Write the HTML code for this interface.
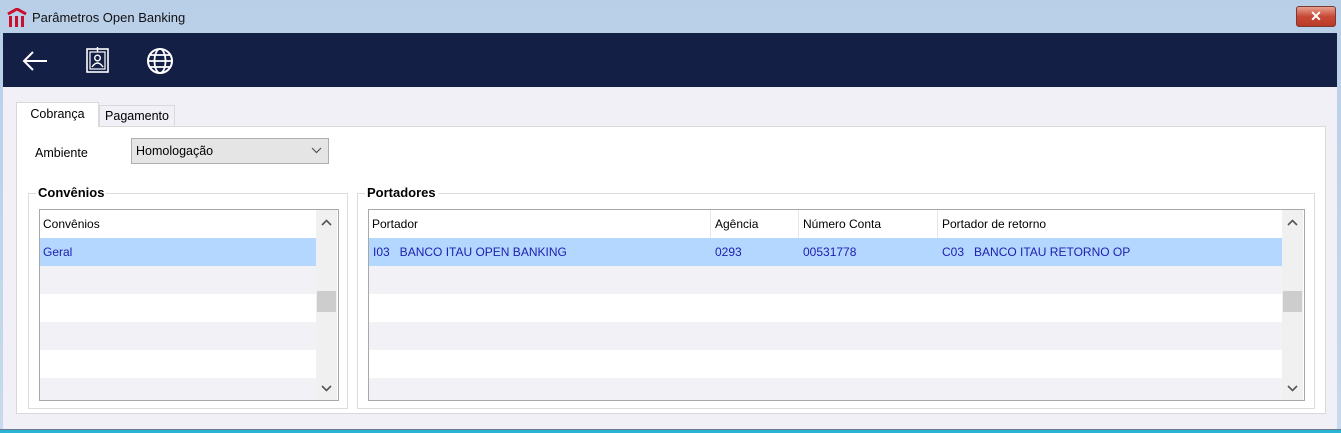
<!DOCTYPE html>
<html><head><meta charset="utf-8"><style>
*{margin:0;padding:0;box-sizing:border-box}
body{width:1341px;height:433px;overflow:hidden;background:#2a3a55;font-family:"Liberation Sans",Tahoma,sans-serif;font-size:12px;color:#000;position:relative}
.a{position:absolute}
.win{left:0;top:0;width:1341px;height:433px;background:linear-gradient(#b9cfe8,#c6d9ee);}
.title{left:32px;top:10px;font-size:13px;color:#111}
.tb{left:3px;top:33px;width:1334px;height:54px;background:#141f45}
.body{left:3px;top:87px;width:1334px;height:342px;background:#f0f0f6}
.cyan{left:0;top:429px;width:1341px;height:4px;background:#2bb3d6;border-top:1px solid #6a7a8a}
.page{left:16px;top:126px;width:1310px;height:288px;background:#fff;border:1px solid #d9d9d9}
.tab{height:24px;border:1px solid #d9d9d9;border-bottom:none;padding:4px 0 0 0;text-align:center;font-size:12.5px}
.grp{border:1px solid #dcdcdc;}
.gt{background:#fff;font-weight:bold;font-size:13px;padding:0 2px}
.list{border:1px solid #a8a8a8;background:#fff;overflow:hidden}
.row{position:absolute;left:0;height:28px;line-height:28px;padding-left:3px;white-space:nowrap}
.sb{position:absolute;top:0;width:21px;height:100%;background:#f0f0f0}
.th{position:absolute;top:0;height:28px;line-height:28px;border-left:1px solid #e6e6e6;padding-left:4px}
.blue{color:#2020b0}
</style></head><body>
<div class="a win"></div>
<svg class="a" style="left:7px;top:8px" width="20" height="20" viewBox="0 0 20 20"><path d="M1 6 L10 1 L19 6" stroke="#c8102e" stroke-width="3" fill="none"/><rect x="2" y="8" width="3" height="11" fill="#c8102e"/><rect x="8" y="8" width="3" height="11" fill="#c8102e"/><rect x="14" y="8" width="3" height="11" fill="#c8102e"/></svg>
<div class="a title">Parâmetros Open Banking</div>
<div class="a" style="left:1296px;top:6px;width:40px;height:21px;border:1px solid #7a3a30;border-radius:3px;background:linear-gradient(#e8a090,#c84a36 50%,#b83a28);color:#fff;font-weight:bold;text-align:center;font-size:14px;line-height:19px">✕</div>
<div class="a tb"></div>
<svg class="a" style="left:20px;top:47px" width="30" height="28" viewBox="0 0 30 28"><path d="M27 14 H4 M13 5 L4 14 L13 23" stroke="#fff" stroke-width="2" fill="none"/></svg>
<svg class="a" style="left:86px;top:46px" width="24" height="28" viewBox="0 0 24 28"><rect x="1" y="3" width="21" height="23" stroke="#fff" stroke-width="1.6" fill="none"/><rect x="4" y="6" width="15" height="17" stroke="#fff" stroke-width="1.2" fill="none"/><circle cx="11.5" cy="12" r="2.8" stroke="#fff" stroke-width="1.4" fill="none"/><path d="M6 21 Q11.5 13 17 21" stroke="#fff" stroke-width="1.4" fill="none"/><path d="M11.5 1 V6" stroke="#fff" stroke-width="1.4"/></svg>
<svg class="a" style="left:146px;top:47px" width="28" height="28" viewBox="0 0 28 28"><circle cx="14" cy="14" r="12" stroke="#fff" stroke-width="2" fill="none"/><ellipse cx="14" cy="14" rx="5.5" ry="12" stroke="#fff" stroke-width="1.8" fill="none"/><path d="M2 14 H26 M4 8 H24 M4 20 H24" stroke="#fff" stroke-width="1.8"/></svg>
<div class="a body"></div>
<div class="a cyan"></div>
<div class="a page"></div>
<div class="a tab" style="left:16px;top:102px;width:83px;height:25px;background:#fff">Cobrança</div>
<div class="a tab" style="left:99px;top:105px;width:76px;height:21px;background:#f0f0f6;padding-top:3px">Pagamento</div>
<div class="a" style="left:35px;top:146px;font-size:12.5px">Ambiente</div>
<div class="a" style="left:131px;top:138px;width:198px;height:26px;background:#e5e5e5;border:1px solid #adadad;padding:5px 0 0 4px;font-size:12.5px">Homologação
<svg style="position:absolute;right:6px;top:8px" width="11" height="7" viewBox="0 0 11 7"><path d="M1 1 L5.5 5.5 L10 1" stroke="#555" stroke-width="1.2" fill="none"/></svg></div>

<div class="a grp" style="left:28px;top:193px;width:320px;height:216px"></div>
<div class="a gt" style="left:36px;top:185px">Convênios</div>
<div class="a list" style="left:39px;top:209px;width:300px;height:192px">
 <div class="row" style="top:0;width:276px;background:#fff">Convênios</div>
 <div class="row blue" style="top:28px;width:276px;background:#b3d7fe">Geral</div>
 <div class="row" style="top:56px;width:276px;background:#f1f1f6"></div>
 <div class="row" style="top:112px;width:276px;background:#f1f1f6"></div>
 <div class="row" style="top:168px;width:276px;background:#f1f1f6"></div>
 <div class="sb" style="left:276px"><div style="position:absolute;left:1px;top:81px;width:19px;height:21px;background:#cdcdcd"></div>
 <svg style="position:absolute;left:5px;top:9px" width="11" height="7"><path d="M1 6 L5.5 1.5 L10 6" stroke="#555" stroke-width="1.6" fill="none"/></svg>
 <svg style="position:absolute;left:5px;top:175px" width="11" height="7"><path d="M1 1 L5.5 5.5 L10 1" stroke="#555" stroke-width="1.6" fill="none"/></svg></div>
</div>

<div class="a grp" style="left:357px;top:193px;width:958px;height:216px"></div>
<div class="a gt" style="left:365px;top:185px">Portadores</div>
<div class="a list" style="left:368px;top:209px;width:937px;height:192px">
 <div class="row" style="top:0;width:913px;background:#fff"></div>
 <div class="th" style="left:0;border:none;padding-left:3px">Portador</div>
 <div class="th" style="left:341px">Agência</div>
 <div class="th" style="left:429px">Número Conta</div>
 <div class="th" style="left:568px">Portador de retorno</div>
 <div class="row blue" style="top:28px;width:913px;background:#b3d7fe;word-spacing:0"><span style="position:absolute;left:4px">I03&nbsp;&nbsp; BANCO ITAU OPEN BANKING</span><span style="position:absolute;left:346px">0293</span><span style="position:absolute;left:434px">00531778</span><span style="position:absolute;left:573px">C03&nbsp;&nbsp; BANCO ITAU RETORNO OP</span></div>
 <div class="row" style="top:56px;width:913px;background:#f1f1f6"></div>
 <div class="row" style="top:112px;width:913px;background:#f1f1f6"></div>
 <div class="row" style="top:168px;width:913px;background:#f1f1f6"></div>
 <div class="sb" style="left:913px"><div style="position:absolute;left:1px;top:81px;width:19px;height:21px;background:#cdcdcd"></div>
 <svg style="position:absolute;left:5px;top:9px" width="11" height="7"><path d="M1 6 L5.5 1.5 L10 6" stroke="#555" stroke-width="1.6" fill="none"/></svg>
 <svg style="position:absolute;left:5px;top:175px" width="11" height="7"><path d="M1 1 L5.5 5.5 L10 1" stroke="#555" stroke-width="1.6" fill="none"/></svg></div>
</div>
</body></html>
